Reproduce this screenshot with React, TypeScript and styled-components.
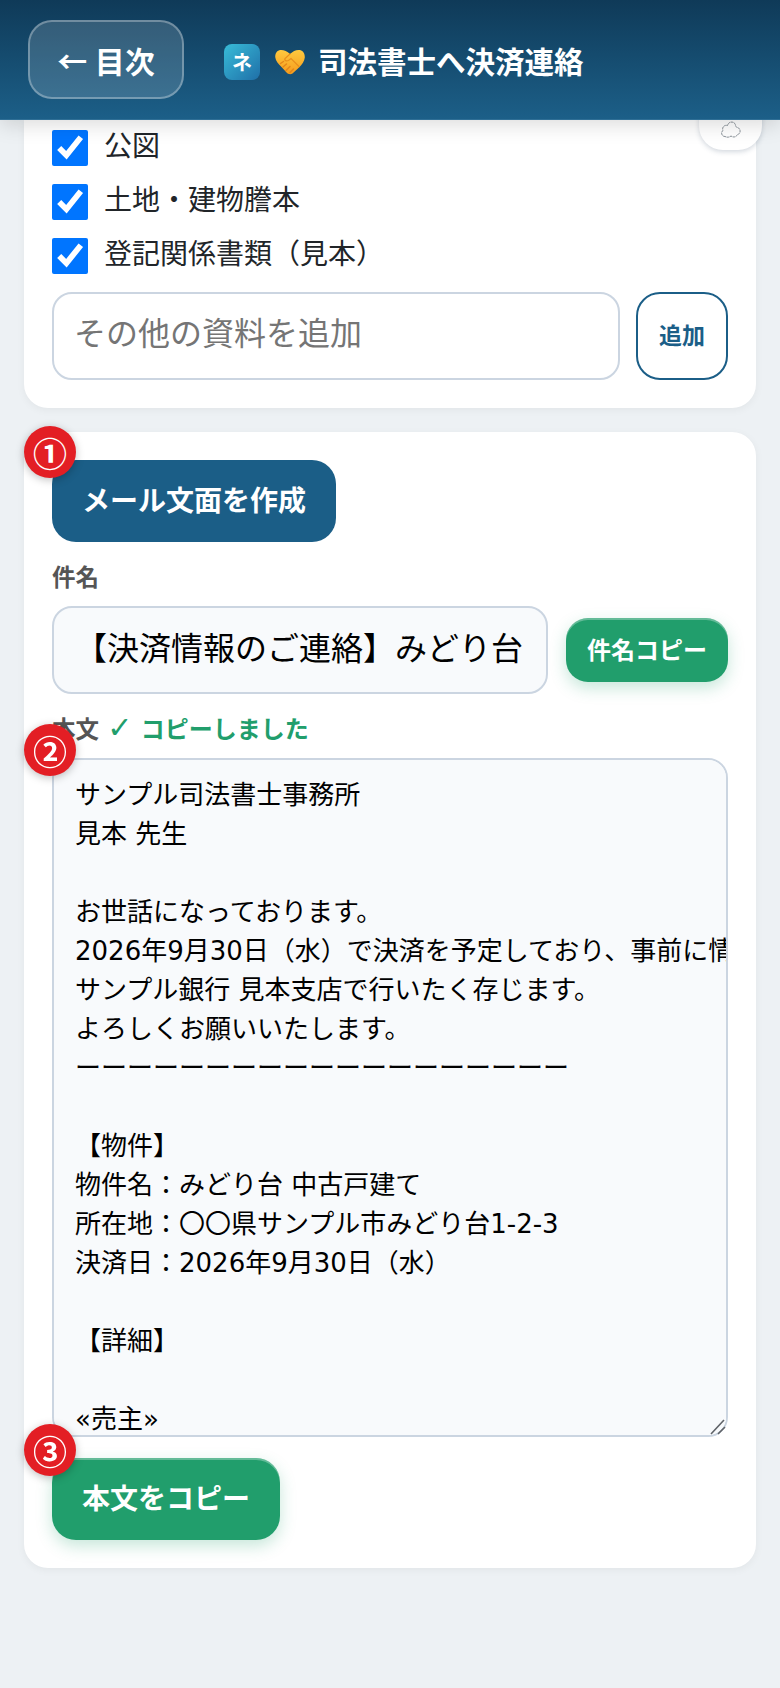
import React from 'react'
import styled, { createGlobalStyle } from 'styled-components'

const FONT = `"DejaVu Sans", "Noto Sans CJK JP", sans-serif`
const CJK_FONT = `"Noto Sans CJK JP", sans-serif`

const GlobalStyle = createGlobalStyle`
  html, body {
    margin: 0;
    padding: 0;
    background: #edf1f4;
    font-family: ${FONT};
    color: #212529;
  }
  * {
    box-sizing: border-box;
  }
`

const BODY_TEXT = `サンプル司法書士事務所
見本 先生

お世話になっております。
2026年9月30日（水）で決済を予定しており、事前に情報をお送りいたします。
サンプル銀行 見本支店で行いたく存じます。
よろしくお願いいたします。
ーーーーーーーーーーーーーーーーーーー

【物件】
物件名：みどり台 中古戸建て
所在地：〇〇県サンプル市みどり台1-2-3
決済日：2026年9月30日（水）

【詳細】

«売主»`

const DOCUMENTS = ['公図', '土地・建物謄本', '登記関係書類（見本）']

const HandshakeIcon = () => (
  <svg width="30" height="26" viewBox="0 0 30 26">
    <defs>
      <linearGradient id='gold' x1='0' y1='0' x2='0' y2='1'>
        <stop offset='0' stopColor='#ffc93f' />
        <stop offset='1' stopColor='#f59c1c' />
      </linearGradient>
    </defs>
    <path
      d='M15 5 C12 2 8 0.5 5 1 C1.5 1.8 0 5 0.3 8.5 C0.7 12 3.5 15 6.5 18 L11.5 23.5 C13 25.3 15.5 25.8 17.5 24.5 L24 18.5 C27 15.5 29.6 12 29.8 8.5 C30 5 28.3 1.8 25 1 C21.5 0.4 18 2 15 5 Z'
      fill='url(#gold)'
    />
    <path
      d='M15 5 L10 9.5 C9 11.5 11.5 12.5 13.5 11.5 L16 9.5 L24 17.5'
      fill='none'
      stroke='#e88f1c'
      strokeWidth='1.2'
      strokeLinecap='round'
    />
    <path
      d='M5.5 14.5 L8.5 12.5 M8 18 L11.5 15 M11 21.5 L15 17.5 M15 23.5 L18.5 20'
      fill='none'
      stroke='#e3861a'
      strokeWidth='1.5'
      strokeLinecap='round'
    />
  </svg>
)

const CloudIcon = () => (
  <svg width="22" height="18" viewBox="0 0 22 18" fill="none" stroke="#8a9299" strokeWidth="1" strokeDasharray="2.6 0.5">
    <path d="M5 16.5 C1.5 16.5 0.5 12 3 10.5 C1.5 7 5 4.5 7.5 5.5 C8.5 1 14.5 1 15.5 5 C15.5 7 16.5 7 17.5 7.5 C21 8.5 21 14 17.5 14.5 C16 17.5 13 17.5 11 16 C9 17.5 7 17.5 5 16.5 Z" />
  </svg>
)

const ResizeGrip = () => (
  <GripSvg width="16" height="16" viewBox="0 0 16 16" stroke="#5f6368" strokeWidth="1.6">
    <path d="M1 15 L14 1 M8 15 L15 8" />
  </GripSvg>
)

const App: React.FC = () => {
  return (
    <>
      <GlobalStyle />
      <Header>
        <BackButton>
          <Arrow>←</Arrow> 目次
        </BackButton>
        <TitleRow>
          <Logo>ネ</Logo>
          <HandshakeIcon />
          <Title>司法書士へ決済連絡</Title>
        </TitleRow>
      </Header>
      <SavePill>
        <CloudIcon />
      </SavePill>

      <Main>
        <TopCard>
          <CheckList>
            {DOCUMENTS.map((doc) => (
              <CheckRow key={doc}>
                <CheckBox type='checkbox' defaultChecked />
                <CheckText>{doc}</CheckText>
              </CheckRow>
            ))}
          </CheckList>
          <AddRow>
            <AddInput placeholder='その他の資料を追加' />
            <AddButton>追加</AddButton>
          </AddRow>
        </TopCard>

        <Card>
          <StepWrap>
            <StepBadge>①</StepBadge>
            <PrimaryButton>メール文面を作成</PrimaryButton>
          </StepWrap>

          <FieldLabel>件名</FieldLabel>
          <SubjectRow>
            <SubjectInput readOnly value='【決済情報のご連絡】みどり台 中古戸建て' />
            <SmallCopyButton>件名コピー</SmallCopyButton>
          </SubjectRow>

          <StepWrap>
            <StepBadge $top={30}>②</StepBadge>
            <FieldLabel>
              本文 <Copied><CheckGlyph>✓</CheckGlyph> コピーしました</Copied>
            </FieldLabel>
            <BodyBox>
              <BodyArea readOnly wrap='off' value={BODY_TEXT} />
              <ResizeGrip />
            </BodyBox>
          </StepWrap>

          <CopyWrap>
            <StepBadge>③</StepBadge>
            <CopyButton>本文をコピー</CopyButton>
          </CopyWrap>
        </Card>
      </Main>
    </>
  )
}

const Header = styled.header`
  position: relative;
  z-index: 10;
  display: flex;
  align-items: center;
  gap: 40px;
  height: 120px;
  padding: 0 28px;
  background: linear-gradient(180deg, #0f3a58 0%, #1c5f88 100%);
  border-bottom: 1px solid #2f6f96;
  box-shadow: 0 4px 20px rgba(0, 0, 0, 0.15);
`

const BackButton = styled.button`
  width: 156px;
  height: 79px;
  padding: 0;
  border: 2px solid rgba(255, 255, 255, 0.3);
  border-radius: 24px;
  background: rgba(255, 255, 255, 0.15);
  color: #fff;
  font-family: ${FONT};
  font-size: 30px;
  font-weight: 700;
`

const Arrow = styled.span`
  margin-right: -3px;
  font-family: ${CJK_FONT};
`

const TitleRow = styled.div`
  display: flex;
  align-items: center;
  gap: 15px;
  padding-top: 4px;
`

const Logo = styled.div`
  display: flex;
  align-items: center;
  justify-content: center;
  width: 36px;
  height: 36px;
  border-radius: 8px;
  background: linear-gradient(135deg, #38bcd8 0%, #1f6fa8 100%);
  color: #fff;
  font-size: 20px;
  font-weight: 700;
`

const Title = styled.h1`
  margin: 0 0 0 -2px;
  padding-top: 5px;
  color: #fff;
  font-size: 29.5px;
  font-weight: 700;
  line-height: 1;
`

const SavePill = styled.div`
  position: absolute;
  z-index: 5;
  top: 90px;
  left: 699px;
  display: flex;
  align-items: flex-end;
  justify-content: center;
  width: 63px;
  height: 60px;
  padding-bottom: 12px;
  border-radius: 24px;
  background: #fff;
  box-shadow: 0 2px 5px rgba(60, 80, 110, 0.22);
`

const Main = styled.main`
  display: flex;
  flex-direction: column;
  gap: 24px;
  padding: 0 24px 120px;
`

const Card = styled.section`
  padding: 28px;
  border-radius: 24px;
  background: #fff;
  box-shadow: 0 2px 8px rgba(0, 0, 0, 0.05);
`

const TopCard = styled(Card)`
  padding-top: 10px;
  border-radius: 0 0 24px 24px;
`

const CheckList = styled.div`
  display: flex;
  flex-direction: column;
  gap: 18px;
`

const CheckRow = styled.label`
  display: flex;
  align-items: center;
  gap: 16px;
  height: 36px;
  font-size: 28px;
`

const CheckBox = styled.input`
  width: 36px;
  height: 36px;
  margin: 0;
`

const CheckText = styled.span`
  padding-bottom: 9px;
`

const AddRow = styled.div`
  display: flex;
  gap: 16px;
  margin-top: 18px;
`

const AddInput = styled.input`
  flex: 1;
  min-width: 0;
  height: 88px;
  padding: 0 20px 4px;
  border: 2px solid #cbd5e1;
  border-radius: 20px;
  background: #fff;
  font-family: ${FONT};
  font-size: 32px;

  &::placeholder {
    color: #757575;
  }
`

const AddButton = styled.button`
  width: 92px;
  height: 88px;
  padding: 0 0 5px;
  border: 2px solid #1b5e87;
  border-radius: 24px;
  background: #fff;
  color: #1b5e87;
  font-family: ${FONT};
  font-size: 23px;
  font-weight: 700;
`

const StepWrap = styled.div`
  position: relative;
`

const CopyWrap = styled.div`
  position: relative;
  margin-top: 21px;
`

const StepBadge = styled.span<{ $top?: number }>`
  position: absolute;
  z-index: 2;
  top: ${(props) => props.$top ?? -34}px;
  left: -28px;
  display: flex;
  align-items: center;
  justify-content: center;
  width: 52px;
  height: 52px;
  border-radius: 50%;
  background: #e31e24;
  color: #fff;
  font-family: ${CJK_FONT};
  font-size: 34px;
  font-weight: 700;
  box-shadow: 0 2px 8px rgba(0, 0, 0, 0.25);
`

const PrimaryButton = styled.button`
  display: block;
  width: 284px;
  height: 82px;
  padding: 0 0 4px;
  border: none;
  border-radius: 24px;
  background: #1b5e87;
  color: #fff;
  font-family: ${FONT};
  font-size: 28px;
  font-weight: 700;
`

const FieldLabel = styled.div`
  height: 64px;
  padding: 24px 0 16px;
  color: #555;
  font-size: 23.5px;
  font-weight: 700;
  line-height: 24px;
`

const SubjectRow = styled.div`
  display: flex;
  align-items: center;
  gap: 18px;
`

const SubjectInput = styled.input`
  flex: 1;
  min-width: 0;
  height: 88px;
  padding: 0 21px 8px;
  border: 2px solid #cbd5e1;
  border-radius: 20px;
  background: #f8fafc;
  color: #000;
  font-family: ${FONT};
  font-size: 32px;
`

const SmallCopyButton = styled.button`
  width: 162px;
  height: 64px;
  padding: 0 0 4px;
  border: none;
  border-radius: 22px;
  background: #219e6c;
  color: #fff;
  font-family: ${FONT};
  font-size: 24px;
  font-weight: 700;
  box-shadow: inset 0 2px 0 rgba(255, 255, 255, 0.3), 0 6px 16px rgba(33, 158, 108, 0.25);
`

const Copied = styled.span`
  color: #219e6c;
  font-size: 24px;
`

const CheckGlyph = styled.span`
  font-size: 30px;
  font-weight: 400;
  line-height: 0;
`

const BodyBox = styled.div`
  position: relative;
`

const BodyArea = styled.textarea`
  display: block;
  width: 100%;
  height: 679px;
  padding: 16px 21px 14px;
  border: 2px solid #cbd5e1;
  border-radius: 20px;
  background: #f8fafc;
  color: #000;
  font-family: ${FONT};
  font-size: 26px;
  line-height: 39px;
  resize: none;
  scrollbar-width: none;
  outline: none;
`

const GripSvg = styled.svg`
  position: absolute;
  right: 2px;
  bottom: 2px;
`

const CopyButton = styled.button`
  display: block;
  width: 228px;
  height: 82px;
  padding: 0 0 4px;
  border: none;
  border-radius: 24px;
  background: #219e6c;
  color: #fff;
  font-family: ${FONT};
  font-size: 28px;
  font-weight: 700;
  box-shadow: inset 0 2px 0 rgba(255, 255, 255, 0.3), 0 6px 16px rgba(33, 158, 108, 0.25);
`

export default App
